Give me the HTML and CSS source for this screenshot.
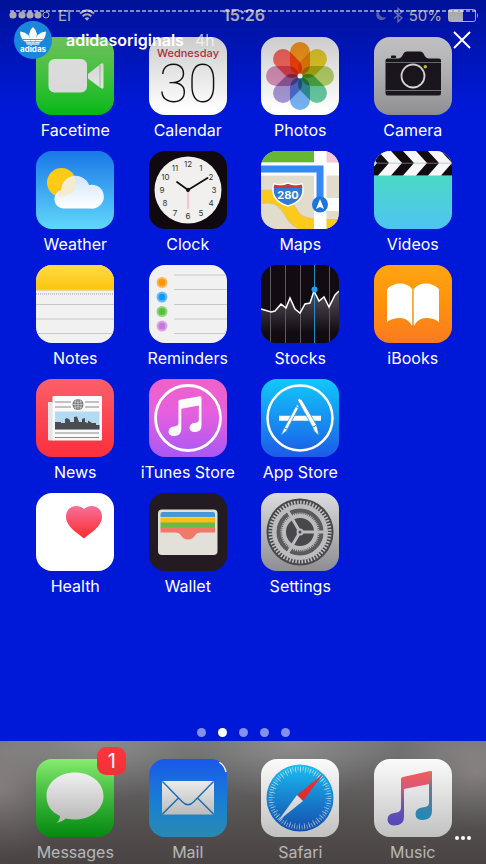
FILE: index.html
```html
<!DOCTYPE html>
<html lang="en">
<head>
    <meta charset="UTF-8">
    <meta name="viewport" content="width=device-width, initial-scale=1.0">
    <title>adidasoriginals</title>
    <link rel="stylesheet" href="styles.css">
</head>
<body>
    <div class="screen">
        <div class="status-bar">
            <div class="status-left">
                <svg width="41" height="10" viewBox="0 0 41 10" fill="currentColor">
                    <circle cx="4" cy="5" r="3.6"/><circle cx="13" cy="5" r="3.6"/><circle cx="21" cy="5" r="3.6"/><circle cx="29" cy="5" r="3.6"/>
                    <circle cx="37" cy="5" r="3" fill="none" stroke="currentColor"/>
                </svg>
                <span>EI</span>
                <svg width="16" height="12" viewBox="0 0 16 12" fill="none" stroke="currentColor" stroke-width="2">
                    <path d="M1 4.5Q8 -1.8 15 4.5M3.6 7.2Q8 3.4 12.4 7.2"/>
                    <path d="M5.6 9.2Q8 7.4 10.4 9.2L8 11.8Z" fill="currentColor" stroke="none"/>
                </svg>
            </div>
            <div class="status-time">15:26</div>
            <div class="status-right">
                <svg width="12" height="12" viewBox="0 0 12 12" fill="currentColor" opacity=".5"><path d="M4 1A5.4 5.4 0 1 0 11.5 8A5.6 5.6 0 0 1 4 1Z"/></svg>
                <svg width="10" height="16" viewBox="0 0 10 16" fill="none" stroke="currentColor" stroke-width="1.3" opacity=".6"><path d="M1 4.5L9 11L5 14.7V1.3L9 5L1 11.5"/></svg>
                <span>50%</span>
                <svg width="31" height="13" viewBox="0 0 31 13"><rect x=".5" y=".5" width="27" height="12" rx="2" fill="none" stroke="currentColor"/><rect x="1" y="1" width="14" height="11" fill="currentColor"/><path d="M29 4Q31 6.5 29 9Z" fill="currentColor"/></svg>
            </div>
        </div>

        <main class="apps">
            <a class="app" href="#">
                <svg class="icon" viewBox="0 0 78 78">
                    <linearGradient id="green" x2="0" y2="1"><stop stop-color="#88f070"/><stop offset="1" stop-color="#06b517"/></linearGradient>
                    <linearGradient id="paper" x2="0" y2="1"><stop stop-color="#fff"/><stop offset="1" stop-color="#e4e4e4"/></linearGradient>
                    <rect width="78" height="78" fill="url(#green)"/>
                    <rect x="12.5" y="22" width="38.5" height="33.5" rx="6" fill="url(#paper)"/>
                    <path d="M52 37L64 27.5Q67.5 25 67.5 28V50Q67.5 53 64 50.5L52 41.5Z" fill="#f4f4f4"/>
                    <path d="M64 28V50.5" stroke="#9bd490"/>
                </svg>
                <span class="label">Facetime</span>
            </a>
            <a class="app" href="#">
                <svg class="icon" viewBox="0 0 78 78">
                    <rect width="78" height="78" fill="#fff"/>
                    <text class="cal-weekday" x="39" y="20">Wednesday</text>
                    <text class="cal-date" x="39" y="65">30</text>
                </svg>
                <span class="label">Calendar</span>
            </a>
            <a class="app" href="#">
                <svg class="icon petals" viewBox="0 0 78 78">
                    <rect width="78" height="78" fill="#fff"/>
                    <rect class="petal" x="29" y="5" width="20" height="33" rx="10" fill="#ff9f20"/>
                    <rect class="petal" x="29" y="5" width="20" height="33" rx="10" fill="#ecd12b" transform="rotate(45 39 39)"/>
                    <rect class="petal" x="29" y="5" width="20" height="33" rx="10" fill="#b7d36a" transform="rotate(90 39 39)"/>
                    <rect class="petal" x="29" y="5" width="20" height="33" rx="10" fill="#67c9a0" transform="rotate(135 39 39)"/>
                    <rect class="petal" x="29" y="5" width="20" height="33" rx="10" fill="#76b2f2" transform="rotate(180 39 39)"/>
                    <rect class="petal" x="29" y="5" width="20" height="33" rx="10" fill="#a897d4" transform="rotate(225 39 39)"/>
                    <rect class="petal" x="29" y="5" width="20" height="33" rx="10" fill="#da92b9" transform="rotate(270 39 39)"/>
                    <rect class="petal" x="29" y="5" width="20" height="33" rx="10" fill="#ff6c64" transform="rotate(315 39 39)"/>
                    <circle cx="39" cy="39" r="2.5" fill="#fff"/>
                </svg>
                <span class="label">Photos</span>
            </a>
            <a class="app" href="#">
                <svg class="icon" viewBox="0 0 78 78">
                    <linearGradient id="steel" x2="0" y2="1"><stop stop-color="#f0f0f2"/><stop offset="1" stop-color="#8c8c90"/></linearGradient>
                    <rect width="78" height="78" fill="url(#steel)"/>
                    <path d="M17 21V19.5Q17 18.5 18 18.5H21Q22 18.5 22 19.5V21ZM13.5 21.5H24Q27 21.5 28.5 18.5Q30 14.5 33 14.5H46Q49 14.5 50.5 18.5Q52 21.5 55 21.5H65Q67 21.5 67 23.5V56Q67 58.5 65 58.5H13.5Q11.5 58.5 11.5 56V23.5Q11.5 21.5 13.5 21.5Z" fill="#1d171f"/>
                    <path d="M11.5 25.5H67M11.5 53.5H67" stroke="#77787a"/>
                    <circle cx="39" cy="39" r="11.5" fill="#1d171f" stroke="#e8e8e8" stroke-width="1.8"/>
                    <circle cx="51.3" cy="29.8" r="1.7" fill="#d8d820"/>
                </svg>
                <span class="label">Camera</span>
            </a>

            <a class="app" href="#">
                <svg class="icon" viewBox="0 0 78 78">
                    <linearGradient id="sky" x2="0" y2="1"><stop stop-color="#1978e8"/><stop offset="1" stop-color="#62d7fa"/></linearGradient>
                    <linearGradient id="cloud" x2="0" y2="1"><stop stop-color="#cfe6fb"/><stop offset="1" stop-color="#fff"/></linearGradient>
                    <rect width="78" height="78" fill="url(#sky)"/>
                    <circle cx="25.5" cy="31.5" r="14.5" fill="#fdcb16"/>
                    <path d="M28 57.5A9.5 9.5 0 0 1 25.5 38.8A14.2 14.2 0 0 1 53 34A12 12 0 1 1 54 57.5Z" fill="url(#cloud)"/>
                    <path d="M25.5 38.8A14.2 14.2 0 0 1 38 25Q42 32 38 39Q34 45 24 46Q18.5 43 25.5 38.8Z" fill="#f5ebd0"/>
                </svg>
                <span class="label">Weather</span>
            </a>
            <a class="app" href="#">
                <svg class="icon clock" viewBox="0 0 78 78">
                    <rect width="78" height="78" fill="#100a10"/>
                    <circle cx="39" cy="39" r="33.5" fill="#f1f0ef"/>
                    <text x="39" y="16">12</text><text x="52" y="19.5">1</text><text x="62" y="29">2</text><text x="65" y="42">3</text>
                    <text x="62" y="55">4</text><text x="52" y="64.5">5</text><text x="39" y="68">6</text><text x="26" y="64.5">7</text>
                    <text x="16" y="55">8</text><text x="13" y="42">9</text><text x="16.5" y="29">10</text><text x="26" y="19.5">11</text>
                    <path d="M39 36V58" stroke="#f2a09c"/>
                    <path d="M39 39L28 31M39 39L58.5 27" stroke="#111" stroke-width="1.8" stroke-linecap="round"/>
                    <circle cx="39" cy="39" r="2" fill="#111"/>
                </svg>
                <span class="label">Clock</span>
            </a>
            <a class="app" href="#">
                <svg class="icon" viewBox="0 0 78 78">
                    <rect width="78" height="78" fill="#e1dccb"/>
                    <path d="M0 46C22 43 26 56 33 66C39 75 55 75 78 75" fill="none" stroke="#e6c468" stroke-width="14"/>
                    <path d="M0 46C22 43 26 56 33 66C39 75 55 75 78 75" fill="none" stroke="#fbca1b" stroke-width="12"/>
                    <path d="M0 0H53V11.5H0Z" fill="#65b633"/>
                    <path d="M65 0H78V12H65Z" fill="#f5c7d2"/>
                    <path d="M0 11.5H53V0H65.5V11.5H78V24.5H65.5V47H78V60H65.5V78H53V24.5H0Z" fill="#fff"/>
                    <path d="M0 18H59V54" fill="none" stroke="#3489f3" stroke-width="7"/>
                    <circle cx="59" cy="53.5" r="8" fill="#1d74dc"/>
                    <path d="M59 48L63 58L59 56L55 58Z" fill="#fff"/>
                    <path d="M13 33Q20 35 27 32Q34 35 41 33Q46 49 27 55Q8 49 13 33Z" fill="#2f7cd2" stroke="#fff" stroke-width="1.5"/>
                    <path d="M13.5 33.5Q20 36 27 33Q34 36 40.5 33.5L41.5 37H12.5Z" fill="#d43434"/>
                    <text class="shield" x="27" y="47.5">280</text>
                </svg>
                <span class="label">Maps</span>
            </a>
            <a class="app" href="#">
                <svg class="icon" viewBox="0 0 78 78">
                    <linearGradient id="teal" x2="0" y2="1"><stop offset=".3" stop-color="#4adac3"/><stop offset="1" stop-color="#4fc4f4"/></linearGradient>
                    <rect width="78" height="78" fill="url(#teal)"/>
                    <rect width="78" height="24.5" fill="#f7f7f7"/>
                    <path d="M-8 0H4L15 12L4 24.5H-8L3 12ZM17 0H29L40 12L29 24.5H17L28 12ZM42 0H54L65 12L54 24.5H42L53 12ZM67 0H79V24.5H67L78 12Z" fill="#120b12"/>
                    <path d="M0 12.2H78" stroke="#aaa" stroke-width=".6"/>
                </svg>
                <span class="label">Videos</span>
            </a>

            <a class="app" href="#">
                <svg class="icon" viewBox="0 0 78 78">
                    <linearGradient id="yellow" x2="0" y2="1"><stop stop-color="#ffdc48"/><stop offset="1" stop-color="#fcc40c"/></linearGradient>
                    <rect width="78" height="78" fill="#f2f1f1"/>
                    <rect width="78" height="24.5" fill="url(#yellow)"/>
                    <path d="M0 25H78" stroke="#d9b65c"/>
                    <path d="M0 29H78" stroke="#999" stroke-dasharray="1 1"/>
                    <path d="M0 39.5H78M0 54H78M0 68.5H78" stroke="#c8c8c8"/>
                </svg>
                <span class="label">Notes</span>
            </a>
            <a class="app" href="#">
                <svg class="icon" viewBox="0 0 78 78">
                    <rect width="78" height="78" fill="#f2f1f1"/>
                    <path d="M25 10H78M25 24.5H78M25 39.5H78M25 54H78M25 68.5H78" stroke="#c8c8c8"/>
                    <g stroke-width="2">
                        <circle cx="13" cy="17.5" r="4.5" fill="#ff9500" stroke="#fbb65c"/>
                        <circle cx="13" cy="32" r="4.5" fill="#1599f8" stroke="#6bbdf6"/>
                        <circle cx="13" cy="46.5" r="4.5" fill="#58c13a" stroke="#93d380"/>
                        <circle cx="13" cy="61" r="4.5" fill="#c976dd" stroke="#dba8e6"/>
                    </g>
                </svg>
                <span class="label">Reminders</span>
            </a>
            <a class="app" href="#">
                <svg class="icon" viewBox="0 0 78 78">
                    <linearGradient id="fade" x2="0" y2="1"><stop stop-color="#57505a"/><stop offset=".8" stop-color="#120b12"/></linearGradient>
                    <rect width="78" height="78" fill="#120b12"/>
                    <path d="M0 44L10 47L14 46L20 39L25 43L29 33L34 44L39 48L44 39L49 38L53 26L58 36L63 32L68 42L74 30L78 26V78H0Z" fill="url(#fade)"/>
                    <path d="M9.5 0V78M24.5 0V78M39.5 0V78M68.5 0V78" stroke="#5c595f"/>
                    <path d="M53.5 0V78" stroke="#218dc9"/>
                    <path d="M0 44L10 47L14 46L20 39L25 43L29 33L34 44L39 48L44 39L49 38L53 26L58 36L63 32L68 42L74 30L78 26" fill="none" stroke="#fff" stroke-width="1.5"/>
                    <circle cx="53.5" cy="24.5" r="3" fill="#22a0f0"/>
                </svg>
                <span class="label">Stocks</span>
            </a>
            <a class="app" href="#">
                <svg class="icon" viewBox="0 0 78 78">
                    <linearGradient id="orange" x2="0" y2="1"><stop stop-color="#ffa511"/><stop offset=".5" stop-color="#ff920b"/><stop offset="1" stop-color="#fb7a20"/></linearGradient>
                    <rect width="78" height="78" fill="url(#orange)"/>
                    <path d="M13 24Q19 18.5 26 18.5Q34 18.5 38 24V61Q34 53 26 53Q18 53 13 57ZM40 24Q44 18.5 52 18.5Q59 18.5 65 24V57Q60 53 52 53Q44 53 40 61Z" fill="#fff"/>
                    <path d="M39 24V60" stroke="#ffc890"/>
                </svg>
                <span class="label">iBooks</span>
            </a>

            <a class="app" href="#">
                <svg class="icon" viewBox="0 0 78 78">
                    <linearGradient id="red" x2="0" y2="1"><stop stop-color="#fc5f6a"/><stop offset="1" stop-color="#fa2f3c"/></linearGradient>
                    <rect width="78" height="78" fill="url(#red)"/>
                    <path d="M12 23H18V61.5H13Q12 61.5 12 60Z" fill="#e4e4e4"/>
                    <rect x="16.5" y="17" width="49.5" height="44.5" rx="1" fill="#fafafa"/>
                    <path d="M19 23H35M19 28H35M49 23H63M49 28H63M19 54H63M19 58.5H63" stroke="#888"/>
                    <circle cx="42" cy="25.5" r="5.5" fill="#777"/>
                    <path d="M36.5 25.5H47.5M42 20V31M38 22.5Q42 24.5 46 22.5M38 28.5Q42 26.5 46 28.5M40 20.5Q37.5 25.5 40 30.5M44 20.5Q46.5 25.5 44 30.5" fill="none" stroke="#ddd" stroke-width=".6"/>
                    <rect x="19" y="32.5" width="44.5" height="18" fill="#b4daf4"/>
                    <path d="M19 50.5V43H25V44H29V40L31 39L34 41V43H38V38L41 37.5L43 43H46V40L49 39V43L52 44V41.5L56 44H60V46H63.5V50.5Z" fill="#4a4c50"/>
                </svg>
                <span class="label">News</span>
            </a>
            <a class="app" href="#">
                <svg class="icon" viewBox="0 0 78 78">
                    <linearGradient id="pink" x2="0" y2="1"><stop stop-color="#f062c8"/><stop offset=".45" stop-color="#e55fdf"/><stop offset="1" stop-color="#a758f5"/></linearGradient>
                    <rect width="78" height="78" fill="url(#pink)"/>
                    <circle cx="39" cy="39" r="32.5" fill="none" stroke="#fff" stroke-width="2.8"/>
                    <path d="M29.5 22Q29.5 21 31 20.7L51 17.3Q52.5 17 52.5 18.5V46.5Q52.5 52 47 53Q41 53.5 40.5 49Q40.5 44.5 46 43.8Q49.8 43.5 49.8 41V26.5L32.3 29.7V50Q32.3 56 26 57Q20 57.5 19.5 53Q19.5 48 25 47.5Q29.5 47 29.5 44Z" fill="#fff"/>
                </svg>
                <span class="label">iTunes Store</span>
            </a>
            <a class="app" href="#">
                <svg class="icon" viewBox="0 0 78 78">
                    <linearGradient id="blue" x2="0" y2="1"><stop stop-color="#11c9fb"/><stop offset="1" stop-color="#1c5be8"/></linearGradient>
                    <rect width="78" height="78" fill="url(#blue)"/>
                    <circle cx="39" cy="39" r="32.5" fill="none" stroke="#fff" stroke-width="2.5"/>
                    <path d="M18 39.3H60" stroke="#fff" stroke-width="5"/>
                    <path d="M35.5 26L22.5 50.5L20 56L25.5 52L38 28Q38 25 35.5 26Z" fill="#fff" stroke="#279be9" stroke-width=".8"/>
                    <path d="M36.5 21Q38 18 41 21L55.5 46L58 56Q53 54 51.5 48Z" fill="#fff" stroke="#279be9" stroke-width=".8"/>
                    <path d="M23 48.5L27 50.5M50.5 49L55.5 46M34 27L37.5 29" stroke="#2a8be5"/>
                </svg>
                <span class="label">App Store</span>
            </a>

            <a class="app new-row" href="#">
                <svg class="icon" viewBox="0 0 78 78">
                    <linearGradient id="heart" x2="0" y2="1"><stop stop-color="#f8709a"/><stop offset="1" stop-color="#fb2b2d"/></linearGradient>
                    <rect width="78" height="78" fill="#fff"/>
                    <path d="M48 45.5C42 40 30 34 30 23.5C30 13 42 10 48 16C54 10 66 13 66 23.5C66 34 54 40 48 45.5Z" fill="url(#heart)"/>
                </svg>
                <span class="label">Health</span>
            </a>
            <a class="app" href="#">
                <svg class="icon" viewBox="0 0 78 78">
                    <rect width="78" height="78" fill="#241a22"/>
                    <rect x="9" y="16.5" width="59.5" height="45.5" rx="4" fill="#e3e0da"/>
                    <path d="M11.5 24V21Q11.5 19 13.5 19H64Q66 19 66 21V24Z" fill="#4699d3"/>
                    <path d="M11.5 24.5H66V30H11.5Z" fill="#fcbd17"/>
                    <path d="M11.5 29.5H66V35H11.5Z" fill="#68bc45"/>
                    <path d="M11.5 34.5H66V39.5H52Q47.5 39.5 46 42.5Q43.5 46.5 39 46.5Q34.5 46.5 32 42.5Q30.5 39.5 26 39.5H11.5Z" fill="#f27968"/>
                </svg>
                <span class="label">Wallet</span>
            </a>
            <a class="app" href="#">
                <svg class="icon" viewBox="0 0 78 78">
                    <linearGradient id="silver" x2="0" y2="1"><stop stop-color="#dcdcde"/><stop offset="1" stop-color="#8d8d92"/></linearGradient>
                    <rect width="78" height="78" fill="url(#silver)"/>
                    <circle cx="39" cy="39" r="33.5" fill="#48474b"/>
                    <circle cx="39" cy="39" r="29.5" fill="none" stroke="#c4c4c6" stroke-width="4" stroke-dasharray="1.5 1.589"/>
                    <circle cx="39" cy="39" r="25.5" fill="none" stroke="#bcbcbe" stroke-width="5"/>
                    <circle cx="39" cy="39" r="20.5" fill="none" stroke="#5a595e" stroke-width="6"/>
                    <circle cx="39" cy="39" r="18.5" fill="none" stroke="#bcbcbe" stroke-width="2" stroke-dasharray="1 .937"/>
                    <circle cx="39" cy="39" r="16" fill="none" stroke="#bcbcbe" stroke-width="4"/>
                    <path d="M39 39H64M39 39L26.5 17.5M39 39L26.5 60.5" stroke="#bcbcbe" stroke-width="3"/>
                    <circle cx="39" cy="39" r="3.5" fill="#bcbcbe"/>
                    <circle cx="39" cy="39" r="1.5" fill="#48474b"/>
                </svg>
                <span class="label">Settings</span>
            </a>
        </main>

        <div class="pages">
            <span class="dot"></span>
            <span class="dot active"></span>
            <span class="dot"></span>
            <span class="dot"></span>
            <span class="dot"></span>
        </div>

        <nav class="dock">
            <a class="app" href="#">
                <svg class="icon" viewBox="0 0 78 78">
                    <rect width="78" height="78" fill="url(#green)"/>
                    <path d="M39 13.5C55 13.5 67.5 23.5 67.5 37C67.5 50.5 55 60.5 39 60.5Q34 60.5 30 59.5Q26 63 20.5 64Q24 61 24 57C15 53 10.5 46 10.5 37C10.5 23.5 23 13.5 39 13.5Z" fill="url(#paper)"/>
                </svg>
                <span class="badge">1</span>
                <span class="label">Messages</span>
            </a>
            <a class="app" href="#">
                <svg class="icon" viewBox="0 0 78 78">
                    <linearGradient id="mail" x2="0" y2="1"><stop stop-color="#1b58ee"/><stop offset=".6" stop-color="#1c98f4"/><stop offset="1" stop-color="#36b4ea"/></linearGradient>
                    <rect width="78" height="78" fill="url(#mail)"/>
                    <path d="M70.5 3A15.5 15.5 0 0 1 77.3 13" fill="none" stroke="#fff" stroke-width="2"/>
                    <rect x="13" y="22" width="52" height="33.5" rx="1" fill="url(#paper)"/>
                    <path d="M13.5 22.5L33 42.5Q39 49 45 42.5L64.5 22.5M13.5 55L29.5 39M64.5 55L48.5 39" fill="none" stroke="#227fcb" stroke-width="1.5"/>
                </svg>
                <span class="label">Mail</span>
            </a>
            <a class="app" href="#">
                <svg class="icon" viewBox="0 0 78 78">
                    <linearGradient id="dial" x2="0" y2="1"><stop stop-color="#1ac6fb"/><stop offset="1" stop-color="#1a66e0"/></linearGradient>
                    <rect width="78" height="78" fill="#fff"/>
                    <circle cx="39" cy="39" r="33.5" fill="url(#dial)"/>
                    <circle cx="39" cy="39" r="29.5" fill="none" stroke="#c9eafd" stroke-width="4" stroke-dasharray=".7 1.875"/>
                    <circle cx="39" cy="39" r="28" fill="none" stroke="#c9eafd" stroke-width="5" stroke-dasharray=".7 4.187"/>
                    <path d="M61.5 15.5L36 36L42 42Z" fill="#fb3434"/>
                    <path d="M16.5 62.5L36 36L42 42Z" fill="#fff"/>
                </svg>
                <span class="label">Safari</span>
            </a>
            <a class="app" href="#">
                <svg class="icon" viewBox="0 0 78 78">
                    <linearGradient id="note" gradientUnits="userSpaceOnUse" x1="42" y1="14" x2="38" y2="65"><stop stop-color="#fc6260"/><stop offset=".3" stop-color="#f06085"/><stop offset=".65" stop-color="#8060cf"/><stop offset="1" stop-color="#6b5bea"/></linearGradient>
                    <linearGradient id="noteright" x2="0" y2="1"><stop stop-color="#f4764f"/><stop offset=".35" stop-color="#6f87a8"/><stop offset="1" stop-color="#28a9e5"/></linearGradient>
                    <rect width="78" height="78" fill="#fff"/>
                    <path d="M27 20Q27 18.3 29 17.9L56 12.1Q58 11.7 58 13.5V24.5L30 30V58Q30 66 21 66.500Q13.5 66.5 13.5 60.5Q13.5 55 20 54Q27 53.5 27 49Z" fill="url(#note)"/>
                    <path d="M55 12.3L56 12.1Q58 11.7 58 13.5V52Q58 60.5 49 61Q41.5 61 41.5 55Q41.5 49.5 48 48.5Q55 48 55 44Z" fill="url(#noteright)"/>
                </svg>
                <span class="label">Music</span>
            </a>
        </nav>

        <!-- story controls over the home screen -->
        <div class="story">
            <div class="progress"></div>
            <header class="story-header">
                <a class="account" href="#">
                    <svg class="avatar" viewBox="0 0 38 38">
                        <circle cx="19" cy="19" r="19" fill="#1a86dc"/>
                        <g fill="#fff">
                            <path d="M19 6Q26 12 20.500 22H17.5Q12 12 19 6Z"/>
                            <path d="M6 10.5Q16 11 17 22H12.5Q6 18 6 10.5ZM32 10.5Q22 11 21 22H25.5Q32 18 32 10.5Z"/>
                        </g>
                        <path d="M9 18.5H29M10 20.8H28" stroke="#1a86dc" stroke-width=".8"/>
                        <path d="M12.5 23H25.5" stroke="#fff" stroke-width="1.2"/>
                        <text class="brand" x="19" y="31">adidas</text>
                    </svg>
                    <span class="username">adidasoriginals</span>
                </a>
                <span class="age">4h</span>
                <button class="close" type="button" aria-label="Close">
                    <svg width="18" height="18" viewBox="0 0 18 18"><path d="M1 1L17 17M17 1L1 17" stroke="#fff" stroke-width="2"/></svg>
                </button>
            </header>
            <button class="more" type="button" aria-label="More">
                <svg width="16" height="4" viewBox="0 0 16 4" fill="#fff"><circle cx="2" cy="2" r="2"/><circle cx="8" cy="2" r="2"/><circle cx="14" cy="2" r="2"/></svg>
            </button>
        </div>
    </div>
</body>
</html>
```

FILE: styles.css
```css
* {
    box-sizing: border-box;
}

body {
    margin: 0;
    font-family: Inter, 'Liberation Sans', sans-serif;
    font-size: 16px;
    color: #fff;
    background-color: #0019d9;
}

svg {
    display: block;
}

button {
    padding: 0;
    border: none;
    background: none;
    cursor: pointer;
}

.screen {
    position: relative;
    min-height: 100vh;
    display: flex;
    flex-direction: column;
}

/* Status bar */
.status-bar {
    display: grid;
    grid-template-columns: 1fr auto 1fr;
    align-items: center;
    height: 30px;
    padding: 0 7px 0 9px;
    color: #e6e6f0;
}

.status-left,
.status-right {
    display: flex;
    align-items: center;
    gap: 8px;
    font-size: 15px;
}

.status-right {
    justify-content: flex-end;
    gap: 6px;
}

.status-time {
    font-weight: 600;
}

/* App grid */
.apps,
.dock {
    display: grid;
    grid-template-columns: repeat(4, 1fr);
    row-gap: 11px;
    padding: 7px 17px 0 19px;
}

.apps {
    flex: 1;
    align-content: start;
}

.app {
    position: relative;
    display: flex;
    flex-direction: column;
    align-items: center;
    gap: 5px;
    color: #fff;
    text-decoration: none;
}

.new-row {
    grid-column-start: 1;
}

.icon {
    width: 78px;
    height: 78px;
    border-radius: 16px;
    overflow: hidden;
}

.label {
    line-height: 20px;
    white-space: nowrap;
}

.icon text {
    text-anchor: middle;
}

.cal-weekday {
    font-size: 11px;
    font-weight: 500;
    fill: #d3343f;
}

.cal-date {
    font-family: Roboto, sans-serif;
    font-size: 54px;
    font-weight: 100;
    fill: #111;
}

.petals {
    isolation: isolate;
}

.petal {
    mix-blend-mode: multiply;
}

.clock text {
    font-size: 8px;
    fill: #333;
}

.shield {
    font-size: 11px;
    font-weight: 700;
    fill: #fff;
}

/* Page dots */
.pages {
    display: flex;
    justify-content: center;
    gap: 12px;
    padding-bottom: 4px;
}

.dot {
    width: 9px;
    height: 9px;
    border-radius: 50%;
    background-color: #8490ee;
}

.dot.active {
    background-color: #fff;
}

/* Dock */
.dock {
    padding-top: 18px;
    padding-bottom: 2px;
    background:
        radial-gradient(70px 70px at 0% 40%, #938b8b, transparent),
        radial-gradient(80px 60px at 98% 25%, #8d8787, transparent),
        radial-gradient(110px 60px at 20% 0%, #8c8c8c, transparent),
        radial-gradient(110px 60px at 60% 0%, #8c8c8c, transparent),
        linear-gradient(#727272, #686464 60%, #6c6262);
}

.badge {
    position: absolute;
    top: -12px;
    left: 50%;
    width: 29px;
    margin-left: 22px;
    border-radius: 9px;
    background-color: #fb353b;
    font-size: 20px;
    line-height: 28px;
    text-align: center;
}

/* Story overlay */
.story {
    position: absolute;
    inset: 0;
    background:
        linear-gradient(rgba(0, 0, 0, 0.3), transparent) top / 100% 110px no-repeat,
        linear-gradient(transparent, rgba(0, 0, 0, 0.32)) bottom / 100% 110px no-repeat;
}

.progress {
    height: 2px;
    margin: 10px 10px 9px 10px;
    background: repeating-linear-gradient(90deg, rgba(255, 255, 255, 0.5) 0 4px, transparent 4px 6px);
}

.story-header {
    display: flex;
    align-items: center;
    padding: 0 15px 0 14px;
}

.account {
    display: flex;
    align-items: center;
    gap: 14px;
    color: #fff;
    text-decoration: none;
}

.avatar {
    width: 38px;
    height: 38px;
}

.brand {
    font-size: 8px;
    font-weight: 700;
    fill: #fff;
    text-anchor: middle;
}

.username {
    font-weight: 600;
}

.age {
    margin-left: 11px;
    opacity: 0.65;
}

.close {
    margin-left: auto;
}

.more {
    position: absolute;
    right: 15px;
    bottom: 24px;
}
```
